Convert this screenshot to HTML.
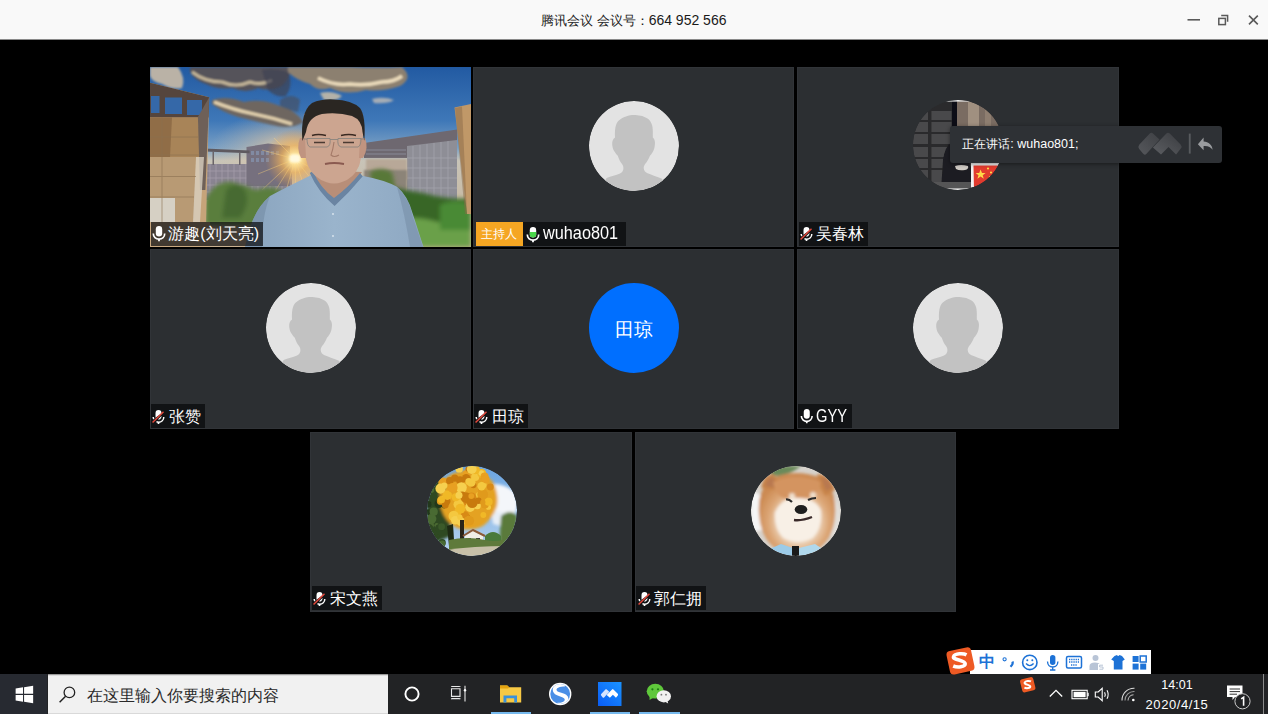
<!DOCTYPE html>
<html><head><meta charset="utf-8">
<style>
*{margin:0;padding:0;box-sizing:border-box}
html,body{width:1268px;height:714px;overflow:hidden;background:#000;font-family:"Liberation Sans",sans-serif}
.abs{position:absolute}
#title{position:absolute;left:0;top:0;width:1268px;height:40px;background:#f9f9f9;border-bottom:1px solid #8a8a8a}
#title .t{position:absolute;left:541px;top:12px;font-size:14px;color:#1a1a1a;white-space:nowrap;letter-spacing:0}
.tile{position:absolute;background:#2c2f32;box-shadow:inset 0 0 0 1px #313438;overflow:hidden}
.av{position:absolute;width:90px;height:90px;border-radius:50%;overflow:hidden}
.lbl{position:absolute;height:24px;background:#111315;color:#fff;font-size:16px;line-height:24px;white-space:nowrap}
.lbl .nm{position:absolute;top:0.5px}
.mic{position:absolute}
#taskbar{position:absolute;left:0;top:674px;width:1268px;height:40px;background:#222325}
</style></head><body>
<div id="title"><div class="t"><span style="font-size:13px;position:relative;top:-0.5px">腾讯会议 会议号：</span><span style="font-size:14px">664 952 566</span></div>
<svg class="abs" style="left:1180px;top:8px" width="88" height="24" viewBox="1180 8 88 24">
<rect x="1187.5" y="19" width="12.5" height="1.6" fill="#5a5a5a"/>
<g fill="none" stroke="#5a5a5a" stroke-width="1.5"><rect x="1218.8" y="18.4" width="6.6" height="6.2"/><path d="M1221.2 15.6H1227.6V21.8"/></g>
<path d="M1249 15.6L1257.8 24.4M1257.8 15.6L1249 24.4" stroke="#5a5a5a" stroke-width="1.6"/>
</svg>
</div>
<!-- tiles -->
<div class="tile" id="t1" style="left:150px;top:67px;width:321px;height:180px"></div>
<svg class="abs" style="left:150px;top:67px" width="321" height="180" viewBox="150 67 321 180">
<defs>
<linearGradient id="sky" x1="0" y1="0" x2="0" y2="1"><stop offset="0" stop-color="#225aa2"/><stop offset="0.3" stop-color="#3f78b8"/><stop offset="0.45" stop-color="#7aa0c4"/><stop offset="0.52" stop-color="#c8c4b8"/><stop offset="1" stop-color="#c8b090"/></linearGradient><radialGradient id="glow" cx="0.5" cy="0.5" r="0.5"><stop offset="0" stop-color="#ffe8b0" stop-opacity="0.9"/><stop offset="0.4" stop-color="#e8c8a0" stop-opacity="0.5"/><stop offset="1" stop-color="#c8c0b0" stop-opacity="0"/></radialGradient>
<radialGradient id="sun" cx="0.5" cy="0.5" r="0.5"><stop offset="0" stop-color="#fffbe0"/><stop offset="0.15" stop-color="#ffe9a0"/><stop offset="0.45" stop-color="#e8b060" stop-opacity="0.8"/><stop offset="1" stop-color="#d09050" stop-opacity="0"/></radialGradient>
<linearGradient id="shirt" x1="0" y1="0" x2="1" y2="0"><stop offset="0" stop-color="#8aa4be"/><stop offset="0.5" stop-color="#9ab4cc"/><stop offset="1" stop-color="#8ea8c2"/></linearGradient>
<filter id="b1" x="-20%" y="-20%" width="140%" height="140%"><feGaussianBlur stdDeviation="1.2"/></filter>
<filter id="b2" x="-20%" y="-20%" width="140%" height="140%"><feGaussianBlur stdDeviation="2.2"/></filter>
<filter id="b05"><feGaussianBlur stdDeviation="0.6"/></filter>
</defs>
<rect x="150" y="67" width="321" height="180" fill="url(#sky)"/><ellipse cx="290" cy="150" rx="80" ry="40" fill="url(#glow)"/>
<!-- clouds -->
<g filter="url(#b1)">
<path d="M190 67H292Q290 78 282 86Q270 92 258 88Q246 94 232 88Q218 90 206 84Q194 80 190 72Z" fill="#55525a"/>
<path d="M192 72Q205 82 222 82Q236 88 250 82Q262 86 272 80" stroke="#d8c8a4" stroke-width="3" fill="none" opacity="0.85"/>
<path d="M262 70Q276 68 288 72Q294 84 286 96Q276 98 268 90Z" fill="#3e4252" opacity="0.7"/>
<path d="M212 100Q226 95 244 102Q262 98 280 106Q296 110 303 122Q292 130 272 125Q254 121 238 117Q220 111 212 104Z" fill="#6e6660"/>
<path d="M214 102Q234 110 254 114Q274 118 292 124" stroke="#e6d4b0" stroke-width="3.2" fill="none"/>
<path d="M280 100Q292 92 300 100L298 112Q288 110 280 106Z" fill="#4a4c58" opacity="0.6"/>
<path d="M150 67H178Q186 78 182 88Q172 90 162 84Q152 82 150 76Z" fill="#bab2a6"/>
<path d="M288 67H350Q378 68 402 67Q414 78 400 86Q382 92 366 90Q346 96 330 88Q318 92 310 84Q296 80 288 72Z" fill="#8c8070"/>
<path d="M318 78Q334 86 350 84Q366 86 382 82Q394 82 402 76" stroke="#ecdcbc" stroke-width="3.5" fill="none"/>
<path d="M320 93Q332 90 342 96Q336 102 324 100Z" fill="#d4c4a8" opacity="0.8"/>
<path d="M372 99Q384 96 394 100Q388 104 374 103Z" fill="#d4c8b8" opacity="0.7"/>
</g>
<!-- distant city & horizon -->
<path d="M200 164H292V200H200Z" fill="#8a8492" filter="url(#b05)"/>
<g stroke="#b4acb8" stroke-width="0.9" opacity="0.55"><path d="M204 164V200M210 164V200M216 164V200M222 164V200M228 164V200M234 164V200M240 164V200M246 164V200M252 164V200M258 164V200M264 164V200M270 164V200M276 164V200M282 164V200M288 164V200"/><path d="M200 171H292M200 178H292M200 185H292M200 192H292"/></g>
<path d="M246.5 147L268 143.5L290 146V186H246.5Z" fill="#76707e" filter="url(#b05)"/>
<g fill="#8aa0c0" opacity="0.55"><rect x="251" y="151" width="3" height="4"/><rect x="256" y="151" width="3" height="4"/><rect x="261" y="151" width="3" height="4"/><rect x="266" y="151" width="3" height="4"/><rect x="271" y="151" width="3" height="4"/><rect x="276" y="151" width="3" height="4"/><rect x="251" y="158" width="3" height="4"/><rect x="256" y="158" width="3" height="4"/><rect x="261" y="158" width="3" height="4"/><rect x="266" y="158" width="3" height="4"/></g>
<path d="M198.6 148.2L249.6 150.6V153.2L198.6 151.2Z" fill="#5e5a60"/>
<path d="M212.5 151.5H214V165H212.5ZM239 152.5H240.5V165H239Z" fill="#6a6468"/>
<!-- right building -->
<path d="M364 143L457 129.6V200H407V158H364Z" fill="#6e6870" filter="url(#b05)"/>
<path d="M407 146L457 140V202L407 202Z" fill="#8e8e96" filter="url(#b05)"/>
<g stroke="#b8b8c0" stroke-width="0.9" opacity="0.45"><path d="M413 146V200M420 145V200M427 144V200M434 143V200M441 142V200M448 141V200"/><path d="M407 158H457M407 168H457M407 178H457M407 188H457"/></g>
<path d="M366 150H406M366 154H406" stroke="#9aa0b0" stroke-width="1" opacity="0.6"/>
<path d="M366 159H407V180H366Z" fill="#b8a898" filter="url(#b1)"/>
<path d="M364 170H407V200H364Z" fill="#8c8478" filter="url(#b1)"/>
<!-- sun -->
<circle cx="295" cy="159" r="30" fill="url(#sun)"/>
<g stroke="#ffd47a" stroke-width="0.8" opacity="0.5"><path d="M295 159L262 190M295 159L272 196M295 159L284 198M295 159L296 200M295 159L308 198M295 159L320 190M295 159L326 176M295 159L258 174M295 159L262 150M295 159L274 138M295 159L318 140M295 159L328 158"/></g>
<rect x="289.5" y="154.5" width="11" height="8" rx="3" fill="#fffae0" filter="url(#b1)"/>
<!-- trees -->
<g filter="url(#b2)">
<path d="M205 200Q215 180 232 182Q245 185 256 190Q270 184 285 192L290 225H205Z" fill="#5a7e3c"/>
<path d="M226 190Q238 178 246 192Q250 205 240 218L222 218Z" fill="#466a30"/>
<path d="M380 196Q392 184 405 190Q420 192 435 196Q455 200 471 198V247H380Z" fill="#386628"/>
<path d="M392 222Q410 215 430 220Q450 226 471 224V247H385Z" fill="#6aa048"/><path d="M440 205Q455 198 471 204V230H440Z" fill="#4a8a36"/>
<path d="M370 172Q380 166 392 172L396 190L372 190Z" fill="#587838"/>
</g>
<!-- left building -->
<path d="M150 82.7L209.2 97.2L205.4 247H150Z" fill="#c6a47a" filter="url(#b05)"/>
<path d="M150 82.7L209.2 97.2L208.5 117.4L150 117.4Z" fill="#54443c" filter="url(#b05)"/>
<path d="M151 96H159.5V113H151ZM165 97.5H182V114H165ZM187 100H202V115H187Z" fill="#3468a8" filter="url(#b05)"/>
<path d="M150 117.4H198L201 157H150Z" fill="#a88458"/>
<path d="M150 117.4H172L170 157H150Z" fill="#8a6844" opacity="0.8"/>
<path d="M197.9 117L209.2 97.2L205.4 190L200 190Z" fill="#6e6058"/>
<path d="M150 157H196L194 222H150Z" fill="#b89a74"/>
<path d="M150 198H175V222H150Z" fill="#d6d0c4" filter="url(#b05)"/>
<path d="M196 157H204L200 222H193Z" fill="#d8d0c0" opacity="0.8"/>
<g stroke="#8a7050" stroke-width="1" opacity="0.6"><path d="M150 137H199M150 155H200M150 176.5H196M150 197H194"/><path d="M162 117V222"/></g>
<path d="M150 222H210V247H150Z" fill="#c8a880"/>
<!-- right tan column -->
<path d="M454.5 107.6L471 104V214H467Z" fill="#c09868" filter="url(#b05)"/><path d="M455 108L462 106.5L467 214H465Z" fill="#8a6a48" opacity="0.5"/>
<!-- man: shirt -->
<path d="M245 247L250 228Q256 208 270 196Q285 188 312.5 174.6L333 204L362 175.7Q385 180 397 186.7Q408 196 412.5 213Q418 230 423.5 247Z" fill="url(#shirt)"/>
<path d="M245 247L250 228Q256 208 270 196Q262 215 262 247Z" fill="#7890a8" opacity="0.7"/>
<path d="M397 187Q410 200 412 214Q418 232 423 247H410Q405 215 397 187Z" fill="#7890a8" opacity="0.6"/>
<!-- neck -->
<path d="M312 170Q318 186 334 204Q350 190 362 172Z" fill="#b88e78"/>
<path d="M309.8 173Q318 192 334.6 206Q350 192 362.7 176.3L360 173Q350 186 334 198Q320 188 313 171Z" fill="#6a84a2" filter="url(#b05)"/>
<!-- head -->
<path d="M304 114Q302 150 308 166Q314 178 326 182Q334 185 342 182Q354 178 359 166Q364 150 363 114Q334 104 304 114Z" fill="#cca590" filter="url(#b05)"/>

<path d="M300 138Q296 148 301 158L306 158L305 138Z" fill="#c09480"/>
<path d="M365 138Q369 148 363 158L359 158L360 138Z" fill="#c09480"/>
<path d="M302.4 141Q300 112 312 103Q322 98.5 334 99.4Q352 100 360 108Q366 116 364.3 141L362.5 132Q362 120 352 116Q338 112 322 114Q308 117 306 132Z" fill="#2c2824" filter="url(#b05)"/>
<path d="M312 135.5Q318 133.5 326 135.5M341 135.5Q349 133.5 356 135.5" stroke="#3a2a22" stroke-width="1.6" fill="none"/>
<g fill="none" stroke="#8a847e" stroke-width="0.9"><path d="M307 138.5H330Q331 146 327 147H310Q307 146 307 138.5Z"/><path d="M338 138.5H361Q361 146 358 147H341Q337 146 338 138.5Z"/><path d="M330 139.5H338M304 139H307M361 139H364"/></g>
<path d="M314 142.5H325M343 142.5H354" stroke="#4a3a32" stroke-width="1.3"/>
<path d="M334 142Q333 150 331 155Q334 158 339 155" stroke="#a47a68" stroke-width="1.1" fill="none"/>
<path d="M325 164Q334 162 344 164" stroke="#8a5a50" stroke-width="1.8" fill="none"/>
<circle cx="333" cy="214" r="0.9" fill="#dde8f0"/>
<circle cx="333" cy="236" r="0.9" fill="#dde8f0"/>
</svg>

<div class="tile" id="t2" style="left:473px;top:67px;width:321px;height:180px"></div>
<div class="tile" id="t3" style="left:797px;top:67px;width:322px;height:180px"></div>
<div class="tile" id="t4" style="left:150px;top:249px;width:321px;height:180px"></div>
<div class="tile" id="t5" style="left:473px;top:249px;width:321px;height:180px"></div>
<div class="tile" id="t6" style="left:797px;top:249px;width:322px;height:180px"></div>
<div class="tile" id="t7" style="left:310px;top:432px;width:322px;height:180px"></div>
<div class="tile" id="t8" style="left:635px;top:432px;width:321px;height:180px"></div>

<!-- silhouette symbol -->
<svg width="0" height="0" style="position:absolute">
<defs>
<symbol id="sil" viewBox="0 0 90 90">
<circle cx="45" cy="45" r="45" fill="#e3e3e3"/>
<clipPath id="cc"><circle cx="45" cy="45" r="45"/></clipPath>
<path clip-path="url(#cc)" fill="#c2c2c2" d="M26 36.5C25.6 29 26.5 22.5 29.5 19.8C31.5 17.8 34 16.2 37 15.4C40 14.4 43 14 46.3 14.1C51.5 14.4 55.5 15.6 58.5 17.6C62.3 20.4 63.8 24.5 63.8 30L63.8 36.5C65.6 38 66.3 40.5 65.9 43.5C65.6 47 64.8 49.5 63.6 51.2C62.8 52.6 61.8 53.8 61 54.7C59.6 58 57.8 61 56.1 63.1C55 64.8 54.7 66 54.7 67.3C55 69.6 56 71 58.5 72.3C63 74.2 68 75.7 73 77.8L80 90L10 90L17.6 77.1C22 75.5 27 74.2 31 72.6C33.5 71.3 34.4 69.6 34.4 67.3C34.4 65.8 34 64.6 33 63.1C31.2 60.7 29.8 57.8 28.8 54.7C27.8 53.9 26.8 52.8 26 51.2C24.5 49.5 23.6 47.2 23.2 43.7C22.9 40.5 23.9 38 26 36.5Z"/>
</symbol>
<symbol id="mic" viewBox="0 0 14 17">
<rect x="3.8" y="1" width="6.4" height="10.4" rx="3.2" fill="#fff"/>
<path d="M1.3 8.6C1.3 12 3.8 14.2 7 14.2C10.2 14.2 12.7 12 12.7 8.6" fill="none" stroke="#fff" stroke-width="1.7"/>
<path d="M7 14L7 16.2" stroke="#fff" stroke-width="1.8"/>
</symbol>
<symbol id="micg" viewBox="0 0 14 17">
<rect x="3.8" y="1" width="6.4" height="10.4" rx="3.2" fill="#fff"/>
<path d="M3.8 6H10.2V8.2A3.2 3.2 0 0 1 3.8 8.2Z" fill="#4bd84b"/>
<path d="M1.3 8.6C1.3 12 3.8 14.2 7 14.2C10.2 14.2 12.7 12 12.7 8.6" fill="none" stroke="#fff" stroke-width="1.7"/>
<path d="M7 14L7 16.2" stroke="#fff" stroke-width="1.8"/>
</symbol>
<symbol id="micm" viewBox="0 0 14 17">
<path d="M3.8 9.5V4.2A3.2 3.2 0 0 1 10.2 4.2V4.5Z" fill="#fff"/>
<path d="M6.3 11.3L10.2 7.5V8.2A3.2 3.2 0 0 1 6.3 11.3Z" fill="#fff"/>
<path d="M1.3 8.6C1.3 9.5 1.6 10.2 2 10.8M4.8 13.6C5.5 14 6.2 14.2 7 14.2C10.2 14.2 12.7 12 12.7 8.6" fill="none" stroke="#fff" stroke-width="1.6"/>
<path d="M7 14L7 16.2" stroke="#fff" stroke-width="1.8"/>
<path d="M0.6 14.6L12.4 3" stroke="#e5483b" stroke-width="1.6"/>
</symbol>
</defs></svg>

<!-- avatars -->
<svg class="av" style="left:588.5px;top:100.5px"><use href="#sil"/></svg>
<svg class="av" style="left:265.5px;top:282.5px"><use href="#sil"/></svg>
<svg class="av" style="left:912.5px;top:282.5px"><use href="#sil"/></svg>
<div class="av" style="left:588.8px;top:282.5px;background:#006fff;color:#fff;font-size:18.5px;line-height:93px;text-align:center">田琼</div>
<svg class="av" style="left:912.5px;top:100px" width="90" height="90" viewBox="0 0 90 90">
<defs><clipPath id="c3"><circle cx="45" cy="45" r="45"/></clipPath><filter id="b3"><feGaussianBlur stdDeviation="0.7"/></filter></defs>
<g clip-path="url(#c3)">
<rect width="90" height="90" fill="#2a2a2c"/>
<g filter="url(#b3)">
<g fill="#4a4a4c"><rect x="0" y="11" width="15" height="9"/><rect x="0" y="22" width="15" height="10"/><rect x="0" y="34" width="15" height="10"/><rect x="0" y="47" width="15" height="10"/><rect x="0" y="59" width="15" height="9"/><rect x="0" y="70" width="15" height="12"/>
<rect x="18.5" y="11" width="20" height="9"/><rect x="18.5" y="22" width="20" height="10"/><rect x="18.5" y="34" width="20" height="10"/><rect x="18.5" y="47" width="20" height="10"/><rect x="18.5" y="59" width="20" height="9"/><rect x="18.5" y="70" width="20" height="12"/></g>
<rect x="44" y="0" width="46" height="26" fill="#7a6c62"/>
<rect x="55" y="0" width="11" height="26" fill="#a09080"/><rect x="72" y="0" width="6" height="26" fill="#8e7e70"/>
<rect x="39" y="0" width="5" height="40" fill="#111113"/>
<rect x="44" y="26" width="46" height="40" fill="#3a3838"/>
<path d="M28 90L30 60Q32 46 39 42Q46 38 51 44Q56 52 57 66L60 72L58 90Z" fill="#1c1c20"/>
<path d="M42 66Q48 64 55 66Q56 69 52 70Q46 71 43 69Z" fill="#cfcac4"/>
<rect x="0" y="82" width="90" height="8" fill="#545456"/>
<path d="M58 63H90V90H58Z" fill="#f2f2f2"/>
<path d="M60.5 65.5H90V90H61Z" fill="#e23a2e"/>
<path d="M67.6 69.5L69 73H72.6L69.7 75.2L70.8 78.8L67.6 76.6L64.4 78.8L65.5 75.2L62.6 73H66.2Z" fill="#ffd84a"/>
<circle cx="75" cy="68.5" r="1.1" fill="#ffd84a"/><circle cx="78" cy="72.5" r="1.1" fill="#ffd84a"/><circle cx="77" cy="77" r="1.1" fill="#ffd84a"/>
</g>
<rect x="0" y="0" width="90" height="1.6" fill="#e6e6e6"/>
<rect x="0" y="88.4" width="90" height="1.6" fill="#e6e6e6"/>
</g></svg>
<svg class="av" style="left:426.5px;top:465.5px" width="90" height="90" viewBox="0 0 90 90">
<defs><clipPath id="c7"><circle cx="45" cy="45" r="45"/></clipPath><filter id="b7"><feGaussianBlur stdDeviation="1.6"/></filter><filter id="b7s"><feGaussianBlur stdDeviation="0.5"/></filter><linearGradient id="sk7" x1="0" y1="0" x2="0" y2="1"><stop offset="0" stop-color="#6aa4e0"/><stop offset="1" stop-color="#b8d4f0"/></linearGradient></defs>
<g clip-path="url(#c7)">
<rect width="90" height="90" fill="url(#sk7)"/>
<g filter="url(#b7)">
<path d="M58 20Q72 14 88 26Q94 40 86 50Q76 54 66 50Q58 42 58 20Z" fill="#f4f6fa"/>
<path d="M64 46Q80 44 90 52V62Q78 62 66 58Z" fill="#e8eef6"/>
<path d="M0 10L20 14Q22 40 24 70L0 80Z" fill="#2e4a22"/>
<path d="M74 50Q84 42 90 50L90 80H72Z" fill="#5a7a3a"/>
<path d="M12 20Q20 6 40 4Q56 4 66 16Q72 28 70 40Q66 52 56 60Q44 66 30 62Q18 56 14 42Z" fill="#e4a222"/>
</g>
<g filter="url(#b7s)"><circle cx="1.6" cy="46.1" r="2.9" fill="#24381a"/><circle cx="1.3" cy="38.2" r="3.2" fill="#24381a"/><circle cx="6.5" cy="25.0" r="3.0" fill="#2e4a22"/><circle cx="2.3" cy="12.2" r="4.2" fill="#2e4a22"/><circle cx="10.2" cy="14.9" r="3.4" fill="#4a6a32"/><circle cx="11.5" cy="15.0" r="4.7" fill="#2e4a22"/><circle cx="6.7" cy="45.7" r="4.1" fill="#4a6a32"/><circle cx="17.1" cy="40.4" r="2.1" fill="#3a5a2a"/><circle cx="9.6" cy="59.3" r="2.2" fill="#4a6a32"/><circle cx="4.0" cy="20.9" r="2.1" fill="#24381a"/><circle cx="6.7" cy="73.1" r="4.4" fill="#24381a"/><circle cx="2.2" cy="59.0" r="4.8" fill="#4a6a32"/><circle cx="12.0" cy="61.9" r="3.7" fill="#2e4a22"/><circle cx="14.6" cy="60.7" r="3.4" fill="#3a5a2a"/><circle cx="13.9" cy="15.0" r="2.3" fill="#2e4a22"/><circle cx="11.9" cy="37.6" r="4.5" fill="#24381a"/><circle cx="15.1" cy="20.2" r="4.5" fill="#4a6a32"/><circle cx="15.1" cy="76.8" r="3.7" fill="#2e4a22"/><circle cx="0.7" cy="64.2" r="3.5" fill="#3a5a2a"/><circle cx="1.9" cy="62.9" r="4.8" fill="#2e4a22"/><circle cx="9.9" cy="71.1" r="2.5" fill="#2e4a22"/><circle cx="4.4" cy="24.2" r="2.7" fill="#4a6a32"/><circle cx="4.6" cy="52.8" r="4.8" fill="#4a6a32"/><circle cx="17.4" cy="37.5" r="2.7" fill="#4a6a32"/><circle cx="15.2" cy="77.8" r="3.2" fill="#4a6a32"/><circle cx="39.5" cy="51.3" r="3.6" fill="#c87a10"/><circle cx="17.7" cy="33.6" r="4.3" fill="#f6d050"/><circle cx="18.3" cy="34.1" r="3.1" fill="#e09a1c"/><circle cx="13.7" cy="34.9" r="3.9" fill="#e09a1c"/><circle cx="46.4" cy="19.3" r="3.0" fill="#c87a10"/><circle cx="35.4" cy="32.3" r="4.8" fill="#f0b828"/><circle cx="39.1" cy="7.7" r="3.4" fill="#e8a020"/><circle cx="44.3" cy="16.5" r="4.3" fill="#f4c840"/><circle cx="32.2" cy="2.9" r="3.7" fill="#f6d050"/><circle cx="14.5" cy="16.8" r="2.9" fill="#d88a18"/><circle cx="46.1" cy="36.1" r="3.2" fill="#e09a1c"/><circle cx="18.3" cy="39.0" r="3.4" fill="#c87a10"/><circle cx="48.2" cy="11.0" r="4.1" fill="#f4c840"/><circle cx="15.8" cy="16.1" r="4.5" fill="#e8a020"/><circle cx="54.7" cy="7.3" r="4.5" fill="#f0b828"/><circle cx="33.1" cy="14.3" r="4.1" fill="#c87a10"/><circle cx="17.3" cy="19.7" r="3.1" fill="#f6d050"/><circle cx="51.9" cy="28.9" r="2.9" fill="#f4c840"/><circle cx="54.3" cy="7.1" r="2.8" fill="#f6d050"/><circle cx="61.4" cy="41.2" r="2.6" fill="#f4c840"/><circle cx="41.0" cy="3.1" r="2.6" fill="#c87a10"/><circle cx="39.2" cy="12.2" r="4.3" fill="#c87a10"/><circle cx="57.6" cy="10.5" r="4.0" fill="#e8a020"/><circle cx="35.3" cy="37.5" r="4.3" fill="#e8a020"/><circle cx="63.3" cy="21.0" r="3.4" fill="#d88a18"/><circle cx="41.1" cy="35.0" r="5.1" fill="#d88a18"/><circle cx="31.6" cy="38.3" r="5.1" fill="#f4c840"/><circle cx="19.1" cy="35.1" r="4.4" fill="#c87a10"/><circle cx="34.4" cy="21.6" r="5.4" fill="#f6d050"/><circle cx="20.3" cy="29.2" r="4.7" fill="#f0b828"/><circle cx="54.5" cy="22.5" r="3.3" fill="#d88a18"/><circle cx="35.2" cy="29.1" r="3.7" fill="#c87a10"/><circle cx="31.4" cy="46.3" r="4.3" fill="#f0b828"/><circle cx="57.9" cy="38.5" r="3.9" fill="#e09a1c"/><circle cx="56.3" cy="18.8" r="3.3" fill="#f4c840"/><circle cx="44.6" cy="31.0" r="4.5" fill="#d88a18"/><circle cx="37.9" cy="49.6" r="4.3" fill="#d88a18"/><circle cx="43.1" cy="41.2" r="4.8" fill="#f6d050"/><circle cx="25.8" cy="21.0" r="3.6" fill="#f6d050"/><circle cx="48.3" cy="3.6" r="4.6" fill="#f0b828"/><circle cx="33.3" cy="42.7" r="4.9" fill="#f0b828"/><circle cx="27.6" cy="51.1" r="4.4" fill="#e8a020"/><circle cx="50.3" cy="39.8" r="3.5" fill="#f6d050"/><circle cx="41.9" cy="55.8" r="5.4" fill="#e8a020"/><circle cx="26.7" cy="50.0" r="5.2" fill="#f4c840"/><circle cx="34.9" cy="55.5" r="2.6" fill="#f0b828"/><circle cx="28.2" cy="54.3" r="4.2" fill="#f6d050"/><circle cx="33.7" cy="55.6" r="4.4" fill="#f6d050"/><circle cx="22.8" cy="14.8" r="3.8" fill="#c87a10"/><circle cx="41.8" cy="15.5" r="3.5" fill="#f4c840"/><circle cx="32.9" cy="51.2" r="2.6" fill="#f4c840"/><circle cx="39.0" cy="31.6" r="5.3" fill="#c87a10"/><circle cx="55.7" cy="28.4" r="5.4" fill="#e09a1c"/><circle cx="42.1" cy="54.7" r="5.0" fill="#e09a1c"/><circle cx="13.5" cy="22.6" r="5.1" fill="#f6d050"/><circle cx="25.7" cy="21.8" r="4.9" fill="#e8a020"/><circle cx="61.6" cy="35.7" r="4.0" fill="#f0b828"/><circle cx="58.4" cy="13.4" r="4.2" fill="#e8a020"/><circle cx="28.7" cy="31.2" r="4.0" fill="#f0b828"/><circle cx="27.8" cy="12.1" r="3.7" fill="#c87a10"/><circle cx="45.2" cy="36.7" r="5.4" fill="#c87a10"/><circle cx="14.4" cy="33.7" r="3.6" fill="#f0b828"/><circle cx="56.3" cy="49.0" r="2.9" fill="#f0b828"/><circle cx="44.7" cy="3.1" r="4.9" fill="#f6d050"/><circle cx="54.6" cy="20.3" r="4.2" fill="#f4c840"/><circle cx="51.4" cy="34.7" r="3.3" fill="#c87a10"/><circle cx="32.0" cy="29.2" r="3.5" fill="#f6d050"/><circle cx="44.3" cy="30.1" r="2.9" fill="#e8a020"/><circle cx="55.8" cy="36.2" r="2.6" fill="#e09a1c"/></g>
<path d="M20 60L23 90H28L26 58Z" fill="#1e2a14"/>
<path d="M33 54H37V80H33Z" fill="#2a2418"/>
<path d="M38 68L46 63L56 68V78H38Z" fill="#f0eee8" filter="url(#b05)"/>
<path d="M36 70L46 64L58 70" fill="none" stroke="#8a5a3a" stroke-width="2"/>
<path d="M40 72H44V76H40ZM49 72H53V76H49Z" fill="#3a3a3a"/>
<path d="M58 70Q66 62 74 70V80H58Z" fill="#4a7a3a" filter="url(#b05)"/>
<path d="M22 74Q40 70 58 74Q66 76 76 74V84H22Z" fill="#5e7a3a" filter="url(#b05)"/>
<path d="M20 84Q45 80 82 80V90H20Z" fill="#c8c0a8" filter="url(#b05)"/>
</g></svg>
<svg class="av" style="left:750.8px;top:465.6px" width="90" height="90" viewBox="0 0 90 90">
<defs><clipPath id="c8"><circle cx="45" cy="45" r="45"/></clipPath><filter id="b8"><feGaussianBlur stdDeviation="1.6"/></filter><radialGradient id="fur" cx="0.52" cy="0.6" r="0.55"><stop offset="0" stop-color="#f6ece0"/><stop offset="0.42" stop-color="#efdcc6"/><stop offset="0.72" stop-color="#dca676"/><stop offset="1" stop-color="#cc8a52"/></radialGradient></defs>
<g clip-path="url(#c8)">
<rect width="90" height="90" fill="#d6d2cc"/>
<g filter="url(#b8)">
<path d="M20 0H50Q40 8 28 10Q20 10 18 4Z" fill="#6a8a5a"/>
<path d="M0 26Q10 24 12 40V64L0 66Z" fill="#f6f6f6"/>
<path d="M80 28Q90 36 90 52V70H80Z" fill="#e2dfda"/>
<path d="M8 48Q6 22 22 12Q45 2 70 12Q86 22 84 50Q82 76 62 86Q46 90 30 86Q10 76 8 48Z" fill="url(#fur)"/>
<path d="M10 22Q12 8 22 8Q30 14 28 24Z" fill="#c8844a"/>
<path d="M14 20Q16 12 21 11Q26 15 25 22Z" fill="#b87850"/>
<path d="M66 8Q80 8 84 24L74 30Q68 20 66 8Z" fill="#c8844a"/>
<path d="M70 11Q78 12 81 22L75 25Q72 18 70 11Z" fill="#b87850"/>
<path d="M22 16Q45 6 70 16Q68 28 58 32Q45 35 32 32Q24 28 22 16Z" fill="#d49460"/>
<path d="M24 46Q32 30 48 32Q64 32 70 44Q72 62 62 72Q47 80 32 72Q22 62 24 44Z" fill="#f8f0e6"/>
<circle cx="41" cy="30" r="3" fill="#f0e2d0"/><circle cx="62" cy="29" r="3" fill="#f0e2d0"/>
</g>
<path d="M35 33.5Q38 33 41 36" stroke="#2a2a2a" stroke-width="2.2" fill="none"/>
<path d="M57 34Q61 32 65 32" stroke="#2a2a2a" stroke-width="2.2" fill="none"/>
<ellipse cx="50" cy="43.5" rx="6.3" ry="4.6" fill="#1e1e1e"/>
<path d="M43 54Q51 55 61 51" stroke="#3a2a2a" stroke-width="2.4" fill="none"/>
<path d="M12 86L30 78L42 82V90H12Z" fill="#9ccbe8" filter="url(#b05)"/>
<path d="M48 82L64 78L76 86V90H48Z" fill="#b0d8ec" filter="url(#b05)"/>
<rect x="41" y="80" width="7" height="10" fill="#1a1a1a"/>
</g></svg>

<!-- labels -->
<div class="lbl" style="left:150.8px;top:221.8px;width:112.2px;background:rgba(12,14,16,.72)"><svg class="mic" style="left:1.6px;top:3.6px" width="14" height="17"><use href="#mic"/></svg><span class="nm" style="left:17.5px">游趣(刘天亮)</span></div>
<div class="lbl" style="left:475.8px;top:221.5px;width:47.3px;background:#f5a623;font-size:12px;text-align:center;color:#fff">主持人</div>
<div class="lbl" style="left:523px;top:221.5px;width:103px"><svg class="mic" style="left:3px;top:4px" width="14" height="17"><use href="#micg"/></svg><span class="nm" style="left:20.3px;font-size:17.5px;transform:scaleX(0.93);transform-origin:0 0;top:-0.5px">wuhao801</span></div>
<div class="lbl" style="left:798.5px;top:221.5px;width:69.4px"><svg class="mic" style="left:1.4px;top:4.5px" width="13" height="15.8"><use href="#micm"/></svg><span class="nm" style="left:17.8px">吴春林</span></div>
<div class="lbl" style="left:151.1px;top:404px;width:53.7px"><svg class="mic" style="left:1.4px;top:4.5px" width="13" height="15.8"><use href="#micm"/></svg><span class="nm" style="left:17.7px">张赞</span></div>
<div class="lbl" style="left:474.1px;top:404px;width:53.7px"><svg class="mic" style="left:1.4px;top:4.5px" width="13" height="15.8"><use href="#micm"/></svg><span class="nm" style="left:18px">田琼</span></div>
<div class="lbl" style="left:798.4px;top:404px;width:53.4px"><svg class="mic" style="left:1.8px;top:4.2px" width="13.5" height="16"><use href="#mic"/></svg><span class="nm" style="left:17.9px;font-size:17.5px;transform:scaleX(0.84);transform-origin:0 0;top:-0.5px">GYY</span></div>
<div class="lbl" style="left:312.1px;top:586.2px;width:69.7px"><svg class="mic" style="left:1.4px;top:4.5px" width="13" height="15.8"><use href="#micm"/></svg><span class="nm" style="left:17.7px">宋文燕</span></div>
<div class="lbl" style="left:636.2px;top:586.2px;width:69.7px"><svg class="mic" style="left:1.4px;top:4.5px" width="13" height="15.8"><use href="#micm"/></svg><span class="nm" style="left:17.6px">郭仁拥</span></div>

<!-- tooltip -->
<div class="abs" style="left:950.3px;top:126.4px;width:271.5px;height:36.6px;background:#2e3135;border-radius:3px;box-shadow:0 1px 4px rgba(0,0,0,.45)">
<div class="abs" style="left:12px;top:9.5px;font-size:12.5px;color:#fff;white-space:nowrap"><span style="font-size:12px">正在讲话</span>: wuhao801;</div>
<svg class="abs" style="left:186px;top:5px" width="80" height="26" viewBox="0 0 80 26">
<defs><linearGradient id="lg1" x1="0" y1="1" x2="1" y2="0"><stop offset="0" stop-color="#56585c"/><stop offset="1" stop-color="#3e4044"/></linearGradient><linearGradient id="lg2" x1="0" y1="1" x2="1" y2="0"><stop offset="0" stop-color="#5c5e62"/><stop offset="1" stop-color="#3a3c40"/></linearGradient></defs>
<path d="M3.2 13.8L13.8 2.6Q15.5 1 17 2.6L23.5 8.4L10.5 22.8Q8.6 24.6 7 22.6L3.2 18Q1.6 16 3.2 13.8Z" fill="url(#lg1)"/>
<path d="M16.9 16.4L30.4 2.6Q32 1 33.8 2.6L44.6 13.6Q46.4 15.6 44.8 17.6L40.1 23.6L32.5 16L25 23.6L16.9 16.4Z" fill="url(#lg2)"/>
<rect x="52.8" y="2.6" width="1.9" height="20" fill="#585b5e"/>
<path d="M61.9 13.3L67.6 6.6V10.4C72.5 10.6 76.5 14 76.6 18.8C74.8 16 71.8 14.6 67.6 15V19.2Z" fill="#9a9c9f"/>
</svg>
</div>
<div id="taskbar">
<div class="abs" style="left:0;top:0;width:47px;height:40px;background:#272a31"></div>
<svg class="abs" style="left:14.8px;top:11px" width="19" height="19" viewBox="0 0 18 18"><path fill="#fff" d="M0.6 3.2L7.6 2.2V8.4H0.6ZM8.6 2.05L17.2 0.8V8.4H8.6ZM0.6 9.4H7.6V15.8L0.6 14.8ZM8.6 9.4H17.2V17.2L8.6 15.95Z"/></svg>
<div class="abs" style="left:47.5px;top:0;width:340.5px;height:40px;background:linear-gradient(#9a9a9a 0,#9a9a9a 1px,#dcdcdc 1px,#dcdcdc 2px,#f1f1f1 2px);border-bottom:1px solid #d9d9d9"></div>
<svg class="abs" style="left:56px;top:10px" width="20" height="22" viewBox="0 0 20 22"><circle cx="13.4" cy="8.4" r="5.3" fill="none" stroke="#222" stroke-width="1.3"/><path d="M9.6 12.2L3.6 18.2" stroke="#222" stroke-width="1.5"/></svg>
<div class="abs" style="left:87px;top:11.5px;font-size:15.8px;color:#2a2a2a;white-space:nowrap">在这里输入你要搜索的内容</div>
<svg class="abs" style="left:402px;top:10px" width="20" height="20" viewBox="0 0 20 20"><circle cx="10" cy="10" r="6.6" fill="none" stroke="#fff" stroke-width="1.9"/></svg>
<svg class="abs" style="left:449px;top:10px" width="20" height="20" viewBox="0 0 20 20"><g fill="none" stroke="#e8e8e8" stroke-width="1.1"><path d="M2.5 2.5H11M2.5 4.8H11V12.4H2.5ZM2.5 14.6H11M16 1.8V17.4"/></g><circle cx="16" cy="6.2" r="1.2" fill="#fff"/><path d="M2.5 2V3M11 2V3M2.5 14V15.3M11 14V15.3" stroke="#bbb" stroke-width="1"/></svg>
<!-- explorer -->
<svg class="abs" style="left:499px;top:10px" width="24" height="20" viewBox="0 0 24 20"><path d="M1 1.6H8.4L10.2 3.2H22.2V18.4H1Z" fill="#f7c945"/><path d="M1 1.6H8.2L10 3.2H10.6L9 4.6H1Z" fill="#e4a30f"/><path d="M4.5 18.5V11.6H18V18.5H15.2V14.2H7.4V18.5Z" fill="#3a91dc"/></svg>
<div class="abs" style="left:491px;top:38px;width:40px;height:2px;background:#76b9ed"></div>
<!-- sogou browser -->
<svg class="abs" style="left:548px;top:8px" width="24" height="24" viewBox="0 0 24 24"><defs><clipPath id="sgc"><circle cx="12.2" cy="12" r="9.9"/></clipPath></defs><circle cx="12.2" cy="12" r="11.2" fill="#fff"/><circle cx="12.2" cy="12" r="9.9" fill="#4a8fe6"/><path clip-path="url(#sgc)" d="M17 2.6C9 1.8 3.8 7 8.2 10.8C11.5 13.4 19.5 12.6 18.6 18.2C18 21.6 13.5 22.6 9.5 22.6" fill="none" stroke="#fff" stroke-width="3.8"/></svg>
<!-- tencent meeting -->
<svg class="abs" style="left:598px;top:8px" width="24" height="24" viewBox="0 0 24 24"><defs><linearGradient id="tmg" x1="0" y1="1" x2="1" y2="0"><stop offset="0" stop-color="#0a5cf5"/><stop offset="1" stop-color="#1a93ff"/></linearGradient></defs><rect x="0" y="0" width="23.5" height="24" fill="url(#tmg)"/><g transform="translate(1.9,6.4) scale(0.4)"><path d="M3.2 13.8L13.8 2.6Q15.5 1 17 2.6L23.5 8.4L10.5 22.8Q8.6 24.6 7 22.6L3.2 18Q1.6 16 3.2 13.8Z" fill="#d6e4ff"/><path d="M16.9 16.4L30.4 2.6Q32 1 33.8 2.6L44.6 13.6Q46.4 15.6 44.8 17.6L40.1 23.6L32.5 16L25 23.6L16.9 16.4Z" fill="#fff"/></g></svg>
<div class="abs" style="left:590px;top:38px;width:40px;height:2px;background:#76b9ed"></div>
<!-- wechat -->
<svg class="abs" style="left:645px;top:9px" width="28" height="22" viewBox="0 0 28 22"><ellipse cx="10.3" cy="8.2" rx="8.6" ry="7.4" fill="#5fc83b"/><path d="M4.5 13L4.6 17L8.5 14.5Z" fill="#5fc83b"/><circle cx="7.4" cy="6.3" r="1.1" fill="#1d7a16"/><circle cx="13" cy="6.3" r="1.1" fill="#1d7a16"/><ellipse cx="18.8" cy="13.3" rx="7.2" ry="6.1" fill="#f1f1f1"/><path d="M22.5 17.5L23.2 20.6L19.6 18.6Z" fill="#f1f1f1"/><circle cx="16.4" cy="11.7" r="0.9" fill="#777"/><circle cx="21" cy="11.7" r="0.9" fill="#777"/></svg>
<div class="abs" style="left:639px;top:38px;width:41px;height:2px;background:#76b9ed"></div>
<!-- tray -->
<svg class="abs" style="left:1019px;top:2px" width="18" height="18" viewBox="0 0 18 18"><rect x="2" y="2" width="13.5" height="13.5" rx="2.5" fill="#ee5a24" transform="rotate(-14 8.75 8.75)"/><path d="M12 5.4C10.5 4.6 6.5 4.6 5.6 6.6C4.8 8.6 11.3 8.6 11.3 10.6C11.3 12.2 7.5 12.6 5.4 11.6" fill="none" stroke="#fff" stroke-width="2"/></svg>
<svg class="abs" style="left:1048px;top:14px" width="16" height="10" viewBox="0 0 16 10"><path d="M1.8 8.5L8 2.3L14.2 8.5" fill="none" stroke="#fff" stroke-width="1.3"/></svg>
<svg class="abs" style="left:1071px;top:15px" width="20" height="12" viewBox="0 0 20 12"><rect x="1" y="1.3" width="15.2" height="8.4" fill="none" stroke="#fff" stroke-width="1.1"/><rect x="2.6" y="2.8" width="12" height="5.4" fill="#fff"/><rect x="16.4" y="3.8" width="1.3" height="3.4" fill="#fff"/></svg>
<svg class="abs" style="left:1094px;top:13px" width="18" height="15" viewBox="0 0 18 15"><path d="M1.3 5H4.2L8.2 1.3V13.7L4.2 10H1.3Z" fill="none" stroke="#fff" stroke-width="1.1"/><path d="M10.6 5.2Q11.8 7.5 10.6 9.8M13 3.3Q15.4 7.5 13 11.7" fill="none" stroke="#fff" stroke-width="1.1"/></svg>
<svg class="abs" style="left:1120px;top:13px" width="16" height="15" viewBox="0 0 16 15"><g fill="none" stroke="#ddd" stroke-width="1.1"><path d="M2 13.5A12 12 0 0 1 14.5 1.2"/><path d="M5 13.5A9 9 0 0 1 14.5 4.5" stroke="#999"/><path d="M8 13.5A6 6 0 0 1 13.5 7.8" stroke="#bbb"/></g><circle cx="13.3" cy="13" r="1.3" fill="#fff"/></svg>
<div class="abs" style="left:1146px;top:3px;width:62px;text-align:center;font-size:12.5px;line-height:17px;color:#fff">14:01</div><div class="abs" style="left:1140px;top:21.5px;width:74px;text-align:center;font-size:13px;line-height:17px;color:#fff;letter-spacing:0.55px">2020/4/15</div>
<svg class="abs" style="left:1225px;top:10px" width="30" height="28" viewBox="0 0 30 28"><path d="M2 1.5H17.5V13H10L7.5 16V13H2Z" fill="#fff"/><path d="M4.6 5H15M4.6 7.6H15M4.6 10.2H12" stroke="#333" stroke-width="1"/><circle cx="17.5" cy="17.3" r="7.6" fill="#202123" stroke="#ccc" stroke-width="1"/><path d="M16.2 14.8L18.6 13.2V21.8" fill="none" stroke="#fff" stroke-width="1.6"/></svg>
<div class="abs" style="left:1262.5px;top:0;width:1px;height:40px;background:#8a8a8a"></div>
</div>
<!-- sogou IME bar -->
<div class="abs" style="left:970px;top:650px;width:181px;height:24px;background:#fff"></div>
<svg class="abs" style="left:944px;top:645px" width="32" height="32" viewBox="0 0 32 32"><rect x="4" y="4" width="25" height="24" rx="4" fill="#ee5a24" transform="rotate(-12 16 16)"/><path d="M22.5 9.8C19.5 8.2 11 8.2 9.6 11.6C8.2 15 21.2 15 21.2 18.8C21.2 22 13.5 22.8 9.2 21" fill="none" stroke="#fff" stroke-width="3.6"/></svg>
<div class="abs" style="left:978.5px;top:652px;font-size:15.5px;line-height:20px;color:#1d72d6;font-weight:bold">中</div>
<svg class="abs" style="left:1000px;top:652px" width="196" height="22" viewBox="1000 652 196 22">
<circle cx="1004.6" cy="659.3" r="1.6" fill="none" stroke="#1d72d6" stroke-width="1.1"/><path d="M1012.5 661.5Q1013.5 664 1010.5 666.8" stroke="#1d72d6" stroke-width="2.2" fill="none"/>
<circle cx="1029.8" cy="662.4" r="7.2" fill="none" stroke="#1d72d6" stroke-width="1.6"/><circle cx="1027.3" cy="660.3" r="1" fill="#1d72d6"/><circle cx="1032.3" cy="660.3" r="1" fill="#1d72d6"/><path d="M1026 663.6Q1029.8 667.6 1033.6 663.6" stroke="#1d72d6" stroke-width="1.4" fill="none"/>
<rect x="1050" y="655" width="5.4" height="10" rx="2.7" fill="#1d72d6"/><path d="M1047.5 661.5Q1047.8 667 1052.7 667Q1057.6 667 1057.9 661.5M1052.7 667V670M1050 670H1055.4" stroke="#1d72d6" stroke-width="1.3" fill="none"/>
<rect x="1066.5" y="656.4" width="15" height="11.5" rx="1.5" fill="none" stroke="#1d72d6" stroke-width="1.5"/><path d="M1069 659.5H1079M1069 662H1079M1071 665H1077" stroke="#1d72d6" stroke-width="1.3" stroke-dasharray="1.3 0.9"/>
<circle cx="1095.5" cy="658" r="3" fill="#b8c4d6"/><path d="M1089.5 670V666Q1089.5 662.5 1095 662.5Q1099 662.5 1100 664.5V670Z" fill="#b8c4d6"/><rect x="1098" y="664" width="6.5" height="6.5" fill="#fff"/><path d="M1103 665.2H1099.6V667H1103V669.2H1099.4" stroke="#b8c4d6" stroke-width="1" fill="none"/>
<path d="M1114.5 656L1117 655Q1118 657 1119.5 655L1122 656L1124.8 659.5L1122.5 661V669.5H1113.8V661L1111.2 659.5Z" fill="#1d72d6"/>
<rect x="1132.6" y="656" width="6" height="6" fill="#1d72d6"/><rect x="1140.2" y="656" width="6" height="6" fill="none" stroke="#1d72d6" stroke-width="1.5"/><rect x="1132.6" y="663.6" width="6" height="6" fill="#1d72d6"/><rect x="1140.2" y="663.6" width="6" height="6" fill="#1d72d6"/>
</svg>

</body></html>
